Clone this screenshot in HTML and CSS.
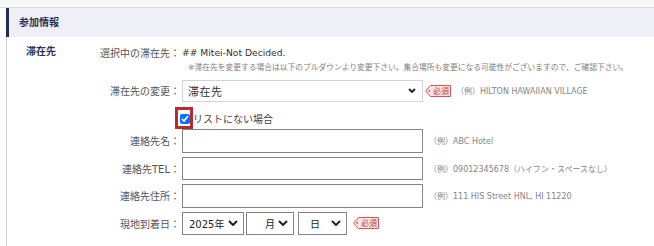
FILE: index.html
```html
<!DOCTYPE html>
<html lang="ja">
<head>
  <meta charset="UTF-8">
  <title>参加情報</title>
  <link rel="stylesheet" href="styles.css">
</head>
<body>
  <div class="top-strip"></div>
  <div class="panel">
    <h2 class="panel-head">参加情報</h2>
    <div class="panel-body">
      <div class="group-label">滞在先</div>
      <div class="fields">
        <div class="row row-current">
          <span class="label">選択中の滞在先：</span>
          <span class="current">## Mitei-Not Decided.</span>
        </div>
        <p class="note">※滞在先を変更する場合は以下のプルダウンより変更下さい。集合場所も変更になる可能性がございますので、ご確認下さい。</p>
        <div class="row row-hotel">
          <span class="label">滞在先の変更：</span>
          <span class="select select-hotel">
            <span class="select-text">滞在先</span>
            <svg class="chevron" width="8" height="5" viewBox="0 0 8 5"><polyline points="1,1 4,4 7,1" fill="none" stroke="#222" stroke-width="1.8"/></svg>
          </span>
          <svg class="badge" width="26" height="12" viewBox="0 0 26 12"><path d="M0.6 6 L5.5 0.5 H25.5 V11.5 H5.5 Z" fill="#fce4e4" stroke="#d65555" stroke-width="1"/><circle cx="4.2" cy="6" r="0.9" fill="#d65555"/><text x="16" y="9" text-anchor="middle" font-size="8" fill="#c83434">必須</text></svg>
          <span class="hint hint-hotel">（例）HILTON HAWAIIAN VILLAGE</span>
        </div>
        <div class="row row-check">
          <label class="check">
            <span class="check-mark"><input type="checkbox" checked></span>
            <span>リストにない場合</span>
          </label>
        </div>
        <div class="row row-input">
          <span class="label">連絡先名：</span>
          <input class="text-input" type="text">
          <span class="hint">（例）ABC Hotel</span>
        </div>
        <div class="row row-input">
          <span class="label">連絡先TEL：</span>
          <input class="text-input" type="text">
          <span class="hint">（例）09012345678（ハイフン・スペースなし）</span>
        </div>
        <div class="row row-input">
          <span class="label">連絡先住所：</span>
          <input class="text-input" type="text">
          <span class="hint">（例）111 HIS Street HNL, HI 11220</span>
        </div>
        <div class="row row-input">
          <span class="label">現地到着日：</span>
          <span class="select select-date select-year">
            <span class="select-text">2025年</span>
            <svg class="chevron" width="10" height="6" viewBox="0 0 10 6"><polyline points="1,1 5,5 9,1" fill="none" stroke="#222" stroke-width="2"/></svg>
          </span>
          <span class="select select-date select-month">
            <span class="select-text">月</span>
            <svg class="chevron" width="10" height="6" viewBox="0 0 10 6"><polyline points="1,1 5,5 9,1" fill="none" stroke="#222" stroke-width="2"/></svg>
          </span>
          <span class="select select-date select-day">
            <span class="select-text">日</span>
            <svg class="chevron" width="10" height="6" viewBox="0 0 10 6"><polyline points="1,1 5,5 9,1" fill="none" stroke="#222" stroke-width="2"/></svg>
          </span>
          <svg class="badge badge-date" width="26" height="12" viewBox="0 0 26 12"><path d="M0.6 6 L5.5 0.5 H25.5 V11.5 H5.5 Z" fill="#fce4e4" stroke="#d65555" stroke-width="1"/><circle cx="4.2" cy="6" r="0.9" fill="#d65555"/><text x="16" y="9" text-anchor="middle" font-size="8" fill="#c83434">必須</text></svg>
        </div>
      </div>
    </div>
  </div>
</body>
</html>
```

FILE: styles.css
```css
body {
  margin: 0;
  background: #fff;
  color: #333;
  font-family: "DejaVu Sans", "Noto Sans CJK JP", sans-serif;
}
.top-strip {
  height: 7px;
  background: #f7f7f7;
  border-bottom: 1px solid #dcdcdc;
}
.panel {
  margin-left: 6px;
  border-left: 1px solid #cfcfcf;
}
.panel-head {
  margin: 0 0 0 -1px;
  height: 29px;
  line-height: 29px;
  padding-left: 10px;
  background: #eef0f5;
  border-left: 3px solid #252d4f;
  font-size: 10px;
  font-weight: bold;
  color: #2b3354;
}
.panel-body {
  display: flex;
  padding: 7px 0 12px 19px;
}
.group-label {
  width: 66px;
  flex: 0 0 auto;
  line-height: 16px;
  font-size: 10px;
  font-weight: bold;
  color: #2b3354;
}
.fields {
  display: flex;
  flex-direction: column;
}
.row {
  display: flex;
  align-items: center;
}
.label {
  width: 88px;
  flex: 0 0 auto;
  text-align: right;
  font-size: 10px;
  color: #555;
  margin-right: 2px;
}
.row-current {
  height: 16px;
}
.current {
  font-size: 9.2px;
  color: #333;
}
.note {
  margin: 2px 0 0 96px;
  line-height: 12px;
  font-size: 7.75px;
  color: #808080;
  white-space: nowrap;
}
.row-hotel {
  margin-top: 5.5px;
  height: 22px;
}
.select {
  display: flex;
  align-items: center;
  box-sizing: border-box;
  height: 100%;
  background: #fff;
}
.select-hotel {
  width: 241px;
  border: 1px solid #d4d4d4;
  padding: 0 6px 0 5px;
  font-size: 11px;
  letter-spacing: 0.5px;
  color: #333;
}
.select .chevron {
  margin-left: auto;
}
.badge {
  flex: 0 0 auto;
  margin-left: 2px;
}
.hint {
  margin-left: 6px;
  font-size: 8px;
  color: #858585;
  white-space: nowrap;
}
.hint-hotel {
  margin-left: 5px;
}
.row-check {
  height: 27.5px;
  padding: 7px 0 0 88px;
  box-sizing: border-box;
}
.check {
  display: flex;
  align-items: center;
  font-size: 10px;
  color: #444;
}
.check-mark {
  position: relative;
  display: flex;
  margin-right: 3px;
}
.check-mark input {
  width: 10px;
  height: 10px;
  margin: 0;
}
.check-mark::after {
  content: "";
  position: absolute;
  top: -7px;
  left: -5px;
  right: -3px;
  bottom: -5px;
  border: 3px solid #b82a30;
}
.row-input {
  height: 23.5px;
}
.row-input + .row-input {
  margin-top: 4px;
}
.text-input {
  width: 241px;
  height: 23.5px;
  box-sizing: border-box;
  margin: 0;
  border: 1px solid #858585;
  background: #fff;
}
.select-date {
  border: 1px solid #858585;
  font-size: 10px;
  color: #222;
  padding-right: 5px;
}
.select-year {
  width: 62px;
  padding-left: 6px;
}
.select-month {
  width: 48px;
  margin-left: 2px;
  padding-left: 18px;
}
.select-day {
  width: 49px;
  margin-left: 4px;
  padding-left: 11px;
}
.badge-date {
  margin-left: 6px;
}
```
